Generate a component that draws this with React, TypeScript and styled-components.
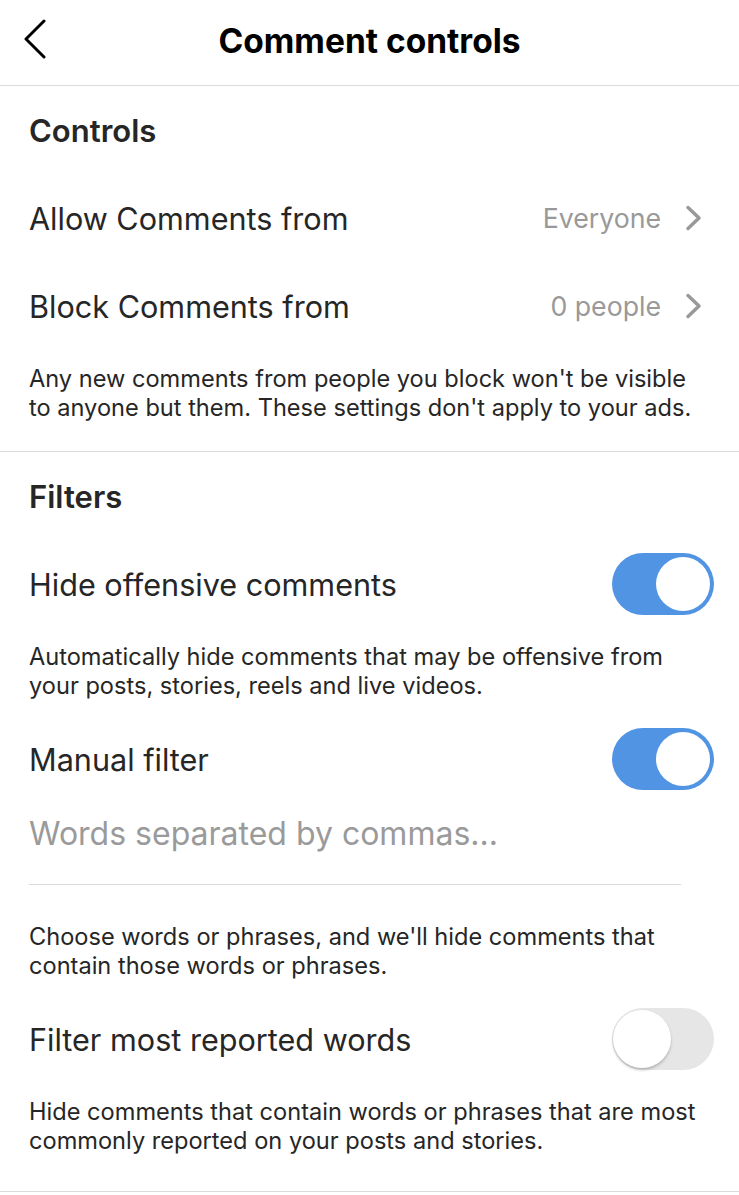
import React from "react";
import styled, { createGlobalStyle } from "styled-components";

const GlobalStyle = createGlobalStyle`
  html, body { margin: 0; padding: 0; background: #ffffff; }
  body { font-family: Inter, Roboto, "Noto Sans", "Liberation Sans", sans-serif; color: #262626; -webkit-font-smoothing: antialiased; }
  * { box-sizing: border-box; }
`;

const Page = styled.div`
  width: 739px;
  min-height: 1195px;
  background: #fff;
  display: flex;
  flex-direction: column;
`;

const Header = styled.header`
  height: 86px;
  display: grid;
  grid-template-columns: 80px 1fr 80px;
  align-items: center;
  border-bottom: 1px solid #dbdbdb;
`;

const BackButton = styled.button`
  border: 0;
  background: none;
  padding: 0 0 0 22px;
  height: 100%;
  display: flex;
  align-items: center;
  cursor: pointer;
  margin-top: -8px;
`;

const Title = styled.h1`
  margin: 0;
  text-align: center;
  font-size: 33.5px;
  font-weight: 700;
  color: #000;
  margin-top: -4px;
`;

const Section = styled.section<{ $padBottom: number }>`
  display: flex;
  flex-direction: column;
  padding-bottom: ${(p) => p.$padBottom}px;
  border-bottom: 1px solid #dbdbdb;
`;

const SectionTitle = styled.h2`
  margin: 0;
  height: 88px;
  display: flex;
  align-items: center;
  padding: 0 29px;
  font-size: 31px;
  font-weight: 600;
  color: #262626;
`;

const Row = styled.div`
  height: 88px;
  display: flex;
  align-items: center;
  justify-content: space-between;
  padding: 0 25px 0 29px;
`;

const Label = styled.span`
  font-size: 30.6px;
  font-weight: 400;
  color: #262626;
`;

const Value = styled.span`
  display: flex;
  align-items: center;
  gap: 24px;
  font-size: 26.7px;
  color: #999999;
  padding-right: 11px;
`;

const Description = styled.p<{ $top?: number; $bottom?: number }>`
  margin: 0;
  padding: ${(p) => p.$top ?? 14}px 29px ${(p) => p.$bottom ?? 15}px;
  font-size: 23.6px;
  line-height: 29px;
  color: #262626;
`;

const InputWrap = styled.div`
  margin: 0 58px 0 29px;
  height: 82px;
  border-bottom: 1px solid #dbdbdb;
  display: flex;
  align-items: flex-start;
`;

const Input = styled.input`
  width: 100%;
  border: 0;
  outline: none;
  padding: 0;
  height: 60px;
  font-family: Inter, Roboto, "Noto Sans", sans-serif;
  font-size: 32px;
  color: #262626;
  background: transparent;
  &::placeholder { color: #9a9a9a; }
`;

const Track = styled.div<{ $on: boolean }>`
  position: relative;
  width: 102px;
  height: 62px;
  border-radius: 31px;
  background: ${(p) => (p.$on ? "#5294e4" : "#e6e6e6")};
  flex-shrink: 0;
`;

const Knob = styled.div<{ $on: boolean }>`
  position: absolute;
  top: ${(p) => (p.$on ? 4 : 2)}px;
  left: ${(p) => (p.$on ? 44 : 1)}px;
  width: ${(p) => (p.$on ? 54 : 58)}px;
  height: ${(p) => (p.$on ? 54 : 58)}px;
  border-radius: 50%;
  background: #fff;
  box-shadow: ${(p) => (p.$on ? "none" : "0 2px 3px rgba(0,0,0,0.22)")};
`;

const Toggle = ({ on }: { on: boolean }) => (
  <Track $on={on}>
    <Knob $on={on} />
  </Track>
);

const Chevron = () => (
  <svg width="18" height="26" viewBox="0 0 18 26" fill="none">
    <path d="M3 2.5 L14 13 L3 23.5" stroke="#999" strokeWidth="3.5" strokeLinecap="round" strokeLinejoin="round" />
  </svg>
);

const BackIcon = () => (
  <svg width="26" height="40" viewBox="0 0 26 40" fill="none">
    <path d="M22 2 L4 20 L22 38" stroke="#000" strokeWidth="3" strokeLinecap="round" strokeLinejoin="round" />
  </svg>
);

export default function App() {
  return (
    <Page>
      <GlobalStyle />
      <Header>
        <BackButton aria-label="Back">
          <BackIcon />
        </BackButton>
        <Title>Comment controls</Title>
        <span />
      </Header>

      <Section $padBottom={29}>
        <SectionTitle>Controls</SectionTitle>
        <Row>
          <Label>Allow Comments from</Label>
          <Value>
            Everyone
            <Chevron />
          </Value>
        </Row>
        <Row>
          <Label>Block Comments from</Label>
          <Value>
            0 people
            <Chevron />
          </Value>
        </Row>
        <Description $bottom={0}>
          Any new comments from people you block won't be visible to anyone but them. These settings don't apply to your ads.
        </Description>
      </Section>

      <Section $padBottom={36}>
        <SectionTitle>Filters</SectionTitle>
        <Row>
          <Label>Hide offensive comments</Label>
          <Toggle on />
        </Row>
        <Description>
          Automatically hide comments that may be offensive from your posts, stories, reels and live videos.
        </Description>
        <Row>
          <Label>Manual filter</Label>
          <Toggle on />
        </Row>
        <InputWrap>
          <Input placeholder="Words separated by commas..." />
        </InputWrap>
        <Description $top={37} $bottom={15}>
          Choose words or phrases, and we'll hide comments that contain those words or phrases.
        </Description>
        <Row>
          <Label>Filter most reported words</Label>
          <Toggle on={false} />
        </Row>
        <Description $bottom={0}>
          Hide comments that contain words or phrases that are most commonly reported on your posts and stories.
        </Description>
      </Section>
    </Page>
  );
}
